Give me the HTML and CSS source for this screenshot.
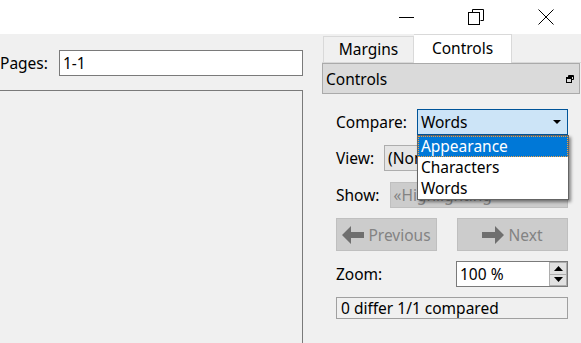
FILE: index.html
```html
<!DOCTYPE html>
<html lang="en">
<head>
  <meta charset="UTF-8">
  <title>Compare</title>
  <link rel="stylesheet" href="styles.css">
</head>
<body>
  <div class="titlebar">
    <div class="wbtn">
      <svg width="16" height="16" viewBox="0 0 16 16"><path d="M1 8.5h15" stroke="#000" fill="none"/></svg>
    </div>
    <div class="wbtn">
      <svg width="16" height="16" viewBox="0 0 16 16" fill="none" stroke="#000">
        <path d="M4.5 3.5V0.5h11v11h-3"/>
        <rect x="0.5" y="3.5" width="11" height="12"/>
      </svg>
    </div>
    <div class="wbtn">
      <svg width="16" height="16" viewBox="0 0 16 16"><path d="M0.5 0.5l15 15M15.5 0.5l-15 15" stroke="#000" fill="none"/></svg>
    </div>
  </div>

  <div class="main">
    <div class="left">
      <div class="pages-row">
        <span class="pages-label">Pages:</span>
        <div class="field">1-1</div>
      </div>
      <div class="preview"></div>
    </div>

    <div class="right">
      <div class="tabs">
        <div class="tab">Margins</div>
        <div class="tab active">Controls</div>
      </div>
      <div class="dock-title">
        <span>Controls</span>
        <svg width="8" height="8" viewBox="0 0 8 8" fill="none" stroke="#000">
          <path d="M2.5 2V0.5h5v4H6"/>
          <rect x="0.5" y="2.5" width="5" height="5"/>
          <path d="M1 3.5h4M3 1.5h4"/>
        </svg>
      </div>

      <div class="controls">
        <div class="row">
          <span class="lbl">Compare:</span>
          <div class="combo focused">
            <span>Words</span>
            <span class="arrow"></span>
            <ul class="popup">
              <li class="sel">Appearance</li>
              <li>Characters</li>
              <li>Words</li>
            </ul>
          </div>
        </div>
        <div class="row">
          <span class="lbl">View:</span>
          <div class="combo">(None)</div>
        </div>
        <div class="row show-row">
          <span class="lbl">Show:</span>
          <div class="combo disabled">«Highlighting»</div>
        </div>
        <div class="row buttons">
          <div class="btn">
            <svg width="22" height="18" viewBox="0 0 22 18"><path d="M0 9L9 0v6h13v6H9v6z" fill="#6f6f6f"/></svg>
            Previous
          </div>
          <div class="btn">
            <svg width="22" height="18" viewBox="0 0 22 18"><path d="M22 9L13 0v6H0v6h13v6z" fill="#6f6f6f"/></svg>
            Next
          </div>
        </div>
        <div class="row zoom-row">
          <span class="lbl">Zoom:</span>
          <div class="spin">
            <span>100 %</span>
            <div class="spin-btns">
              <div class="sb"><svg width="9" height="5" viewBox="0 0 9 5"><path d="M0 5L4.5 0L9 5z" fill="#000"/></svg></div>
              <div class="sb"><svg width="9" height="5" viewBox="0 0 9 5"><path d="M0 0L4.5 5L9 0z" fill="#000"/></svg></div>
            </div>
          </div>
        </div>
        <div class="status">0 differ 1/1 compared</div>
      </div>
    </div>
  </div>
</body>
</html>
```

FILE: styles.css
```css
body {
  margin: 0;
  background-color: #f0f0f0;
  font-family: "Noto Sans", "Open Sans", sans-serif;
  font-size: 15.5px;
  color: #000;
  overflow: hidden;
  height: 343px;
}

.titlebar {
  height: 34px;
  background-color: #fff;
  display: flex;
  justify-content: flex-end;
}

.wbtn {
  width: 70px;
  display: flex;
  align-items: center;
  justify-content: center;
}

.main {
  display: flex;
  height: 309px;
}

.left {
  width: 303px;
}

.pages-row {
  display: flex;
  align-items: center;
  padding-top: 16px;
}

.pages-label {
  width: 59px;
}

.field {
  width: 244px;
  height: 26px;
  box-sizing: border-box;
  border: 1px solid #7a7a7a;
  background-color: #fff;
  padding-left: 3px;
  line-height: 24px;
}

.preview {
  margin-top: 14px;
  height: 252px;
  border: 1px solid #7a7a7a;
  border-left: none;
  border-bottom: none;
}

.right {
  flex: 1;
  padding-left: 19px;
}

.tabs {
  display: flex;
  align-items: flex-end;
  height: 28px;
  border-bottom: 1px solid #d9d9d9;
  padding-left: 1px;
}

.tab {
  height: 26px;
  box-sizing: border-box;
  width: 91px;
  border: 1px solid #d9d9d9;
  border-bottom: none;
  text-align: center;
  line-height: 25px;
}

.tab.active {
  width: 98px;
  height: 29px;
  margin-bottom: -1px;
  background-color: #fff;
  line-height: 27px;
  border-left: none;
}

.dock-title {
  height: 31px;
  box-sizing: border-box;
  background-color: #dadada;
  border: 1px solid #aaa;
  margin-right: 1px;
  display: flex;
  align-items: center;
  justify-content: space-between;
  padding: 0 5px 0 3px;
}

.controls {
  padding: 15px 13px 0 14px;
  display: flex;
  flex-direction: column;
  gap: 10px;
}

.row {
  display: flex;
  align-items: center;
  gap: 10px;
}

.show-row {
  margin-top: 1px;
}

.combo {
  flex: 1;
  position: relative;
  height: 26px;
  box-sizing: border-box;
  border: 1px solid #adadad;
  background-color: #e5e5e5;
  padding-left: 3px;
  line-height: 24px;
  display: flex;
  justify-content: space-between;
}

.combo.focused {
  background-color: #cce4f7;
  border-color: #005499;
}

.combo.disabled {
  background-color: #cccccc;
  border-color: #bfbfbf;
  color: #838383;
}

.arrow {
  width: 0;
  height: 0;
  border-left: 4px solid transparent;
  border-right: 4px solid transparent;
  border-top: 4px solid #000;
  margin: 10px 6px 0 0;
}

.popup {
  position: absolute;
  top: 25px;
  left: -1px;
  width: 152px;
  box-sizing: border-box;
  margin: 0;
  padding: 0;
  list-style: none;
  background-color: #fff;
  border: 1px solid #646464;
  box-shadow: 2px 2px 3px rgba(0, 0, 0, 0.45);
  z-index: 2;
}

.popup li {
  height: 21px;
  line-height: 20px;
  padding-left: 3px;
}

.popup li.sel {
  background-color: #0078d7;
  color: #fff;
  outline: 1px dotted #f0a040;
  outline-offset: -1px;
}

.buttons {
  gap: 20px;
}

.btn {
  flex: 1;
  height: 33px;
  box-sizing: border-box;
  border: 1px solid #bfbfbf;
  background-color: #cccccc;
  color: #838383;
  display: flex;
  align-items: center;
  justify-content: center;
  gap: 4px;
}

.buttons .btn:first-child {
  flex: 0 0 101px;
}

.zoom-row {
  justify-content: space-between;
}

.spin {
  width: 112px;
  height: 26px;
  box-sizing: border-box;
  border: 1px solid #7a7a7a;
  background-color: #fff;
  display: flex;
  justify-content: space-between;
  padding-left: 3px;
  line-height: 24px;
}

.spin-btns {
  width: 18px;
  display: flex;
  flex-direction: column;
}

.sb {
  flex: 1;
  background-color: #e1e1e1;
  border: 1px solid #adadad;
  border-top: none;
  display: flex;
  align-items: center;
  justify-content: center;
}

.sb:first-child {
  border-top: 1px solid #adadad;
}

.status {
  height: 22px;
  box-sizing: border-box;
  border: 1px solid #a0a0a0;
  padding-left: 4px;
  line-height: 20px;
}
```
